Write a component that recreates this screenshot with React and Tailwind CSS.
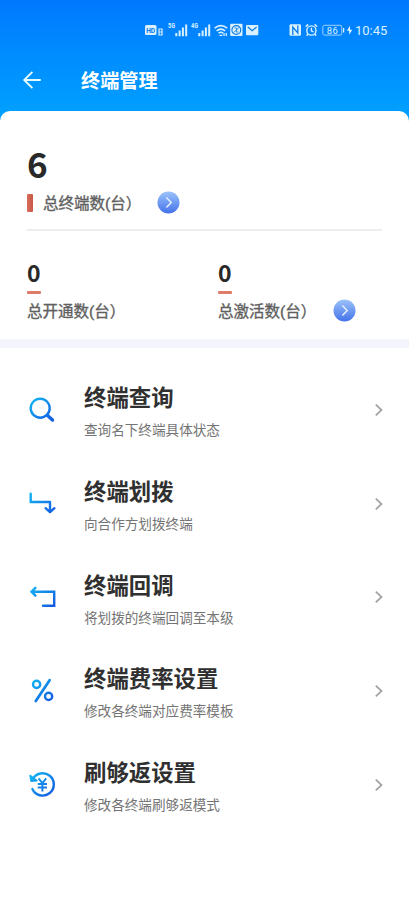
import React from "react";

const grad = (id) => (
  <defs>
    <linearGradient id={id} x1="0" y1="0" x2="28" y2="30" gradientUnits="userSpaceOnUse">
      <stop offset="0.1" stopColor="#12b8f4" />
      <stop offset="0.9" stopColor="#1455e0" />
    </linearGradient>
  </defs>
);

function RowIcon({ id, children }) {
  return (
    <svg className="h-[30px] w-[28px] shrink-0" viewBox="0 0 28 30" fill="none" stroke={`url(#${id})`} strokeWidth="2.4">
      {grad(id)}
      {children}
    </svg>
  );
}

const rows = [
  {
    id: "search",
    title: "终端查询",
    sub: "查询名下终端具体状态",
    icon: (
      <>
        <circle cx="12.2" cy="13.2" r="9.5" />
        <path d="M19.3 20.3l5.2 4.7" strokeWidth="3.4" strokeLinecap="round" />
      </>
    ),
  },
  {
    id: "assign",
    title: "终端划拨",
    sub: "向合作方划拨终端",
    icon: <path d="M2.7 4.6v8.4H22v10M17.6 19.2l4.4 4 4.4-4" strokeLinecap="round" strokeLinejoin="round" />,
  },
  {
    id: "recall",
    title: "终端回调",
    sub: "将划拨的终端回调至本级",
    icon: <path d="M7.4 5.8L3.5 9.7l3.9 4M4 9.7h22.2v14H15" strokeLinecap="round" />,
  },
  {
    id: "rate",
    title: "终端费率设置",
    sub: "修改各终端对应费率模板",
    icon: (
      <>
        <circle cx="8.6" cy="8.4" r="3.6" />
        <circle cx="20.6" cy="20.4" r="3.6" />
        <path d="M21.6 4.2L7.8 25" strokeWidth="2.8" strokeLinecap="round" />
      </>
    ),
  },
  {
    id: "cashback",
    title: "刷够返设置",
    sub: "修改各终端刷够返模式",
    icon: (
      <>
        <path d="M4.6 9.4A11.2 11.2 0 1 1 4.4 19" strokeLinecap="round" />
        <path d="M2.2 5.6l1 5.4 5.6-.4z" strokeWidth="1.8" strokeLinejoin="round" fill="#12b0f0" />
        <path d="M10.6 8.3l3.8 4.8 3.8-4.8M14.4 13v8.6M9.8 14h9.2M9.8 17.6h9.2" strokeWidth="2" />
      </>
    ),
  },
];

function Go({ id }) {
  return (
    <svg className="size-[23px] shrink-0" viewBox="0 0 23 23" fill="none">
      <defs>
        <linearGradient id={id} x1="0" y1="0" x2="0" y2="1">
          <stop offset="0" stopColor="#9cc3fa" />
          <stop offset="1" stopColor="#4472ea" />
        </linearGradient>
      </defs>
      <circle cx="11.5" cy="11.5" r="11" fill={`url(#${id})`} />
      <path d="M9.4 6.6l4.8 4.9-4.8 4.9" stroke="#e9f2ff" strokeWidth="1.4" />
    </svg>
  );
}

function Signal({ label }) {
  return (
    <svg className="h-[14px] w-[20px]" viewBox="0 0 20 14" fill="#d9f1ff">
      <text x="0" y="5.2" fontSize="7" fontWeight="700" textLength="7" lengthAdjust="spacingAndGlyphs">{label}</text>
      <path d="M7.3 10h2v3.2h-2zM10.6 7.5h2v5.7h-2zM13.9 4.5h2v8.7h-2zM17.2 1.5h2v11.7h-2z" />
    </svg>
  );
}

function StatusBar() {
  return (
    <div className="flex h-[60px] items-center pl-[145px] text-[#d9f1ff]">
      <svg className="h-[14px] w-[23px]" viewBox="0 0 23 14" fill="none">
        <rect x="0" y="2" width="11.5" height="10" rx="1.5" fill="#d9f1ff" />
        <text x="1.2" y="9.8" fontSize="7.5" fontWeight="700" fill="#087dec" textLength="9" lengthAdjust="spacingAndGlyphs">HD</text>
        <path d="M14 6h3v6h-3zM14.2 9h2.6" stroke="currentColor" strokeWidth="1.2" />
      </svg>
      <Signal label="5G" />
      <span className="w-[3px]" />
      <Signal label="4G" />
      <svg className="ml-[3px] h-[14px] w-[14px]" viewBox="0 0 14 14" fill="none" stroke="currentColor" strokeWidth="1.6">
        <path d="M.6 5.2q6.3-5.2 12.6 0M2.6 7.8q4.3-3.4 8.6 0M4.6 10.2q2.3-1.8 4.6 0" />
        <path d="M5.5 12.3h2.8M10 10v3M12.3 10v3" strokeWidth="1.3" />
      </svg>
      <svg className="ml-[2px] h-[14px] w-[13px]" viewBox="0 0 13 14" fill="none">
        <rect x=".2" y=".8" width="12.3" height="12.3" rx="1" fill="#d9f1ff" />
        <circle cx="6.3" cy="7" r="4.4" stroke="#0878dd" strokeWidth="1.1" />
        <path d="M3.2 10L9.5 4M4.5 5h2.2v2.2M8.5 9H6.3V7" stroke="#0878dd" strokeWidth=".8" />
      </svg>
      <svg className="ml-[3px] h-[14px] w-[13px]" viewBox="0 0 13 14" fill="none">
        <rect x="0" y="2" width="12.3" height="10.3" rx="1" fill="#d9f1ff" />
        <path d="M1.8 4l4.4 3.7L10.6 4" stroke="#0878dd" strokeWidth="1.2" />
      </svg>
      <svg className="ml-[30px] h-[14px] w-[13px]" viewBox="0 0 13 14" fill="none">
        <rect x=".5" y="1.2" width="11.5" height="11.6" rx="1.2" fill="#d9f1ff" />
        <path d="M3.8 12V4l5 6V2.4" stroke="#087dec" strokeWidth="1.3" />
      </svg>
      <svg className="ml-[3px] h-[14px] w-[13px]" viewBox="0 0 13 14" fill="none" stroke="currentColor" strokeWidth="1.4">
        <circle cx="6.4" cy="7.5" r="4.6" />
        <path d="M6.4 4.8v3l2.1 1.2M.7 3.6l2.5-2.2M12.1 3.6L9.6 1.4M3 11l-1.3 1.7M9.8 11l1.3 1.7" />
      </svg>
      <svg className="ml-[4px] h-[14px] w-[31px]" viewBox="0 0 31 14" fill="none">
        <rect x=".8" y="2.3" width="19" height="9.8" rx="1.8" stroke="#9fd2ff" />
        <path d="M21.6 5v4.5" stroke="#d9f1ff" strokeWidth="1.3" />
        <text x="4.8" y="10.6" fontSize="9.5" fill="#d9f1ff" textLength="11">86</text>
        <path d="M28 2.7l-3 5h2.2v4.1l3-5H28z" fill="#e8f7ff" />
      </svg>
      <span className="ml-[2px] font-[Roboto] text-[13px] leading-none">10:45</span>
    </div>
  );
}

const label = "text-[15.5px] leading-[22px] text-[#606060] whitespace-nowrap [-webkit-text-stroke:0.35px_#606060]";
const digit = "font-['Noto_Sans_CJK_SC'] font-bold text-[#292929]";

export default function App() {
  return (
    <div className="h-[900px] w-[409px] overflow-hidden bg-white font-['Roboto','Noto_Sans_CJK_SC',sans-serif]">
      <div className="h-[123px] bg-linear-to-b from-[#0078ff] to-[#00a3ff]">
        <StatusBar />
        <div className="flex h-[40px] items-center pl-[22px] text-white">
          <svg className="h-[20px] w-[20px]" viewBox="0 0 20 20" fill="none" stroke="#e4fbff" strokeWidth="1.9">
            <path d="M10.4 1.8L2.2 10l8.2 8.2M2.2 10h16.6" />
          </svg>
          <h1 className="ml-[39px] pt-[4px] text-[19.2px] font-bold leading-none">终端管理</h1>
        </div>
      </div>
      <main className="-mt-[12px] rounded-t-[10px] bg-white">
        <section className="h-[228px] px-[27px] pt-[32px]">
          <div className={`text-[35px] leading-[40px] ${digit}`}>6</div>
          <div className="mt-[8px] flex h-[23px] items-center">
            <span className="h-[18px] w-[6px] rounded-[1px] bg-linear-to-r from-[#d86d5b] to-[#c95746]" />
            <span className={`ml-[10px] w-[114px] pt-[2px] ${label}`}>总终端数(台）</span>
            <Go id="go-total" />
          </div>
          <div className="mt-[15px] h-[2px] bg-[#ededed]" />
          <div className="flex pt-[28px]">
            <div className="w-[191px]">
              <div className={`text-[23px] leading-[26px] ${digit}`}>0</div>
              <div className="mt-[6px] h-[3px] w-[14px] rounded-[1px] bg-[#df7c69]" />
              <div className="mt-[5px] flex h-[23px] items-center">
                <span className={`pt-[2px] ${label}`}>总开通数(台）</span>
              </div>
            </div>
            <div>
              <div className={`text-[23px] leading-[26px] ${digit}`}>0</div>
              <div className="mt-[6px] h-[3px] w-[14px] rounded-[1px] bg-[#df7c69]" />
              <div className="mt-[5px] flex h-[23px] items-center">
                <span className={`w-[115px] pt-[2px] ${label}`}>总激活数(台）</span>
                <Go id="go-active" />
              </div>
            </div>
          </div>
        </section>
        <div className="h-[9px] bg-[#f4f4fc]" />
        <ul className="pt-[15px]">
          {rows.map((r) => (
            <li key={r.id} className="flex h-[93.7px] items-center pl-[28px] pr-[25px]">
              <RowIcon id={r.id}>{r.icon}</RowIcon>
              <div className="ml-[28px] flex-1 pt-[3px]">
                <h2 className="text-[22.4px] font-bold leading-[32px] text-[#303030]">{r.title}</h2>
                <p className="mt-[6px] text-[13.6px] leading-[20px] text-[#747474]">{r.sub}</p>
              </div>
              <svg className="h-[14px] w-[10px]" viewBox="0 0 10 14" fill="none" stroke="#a3a3a3" strokeWidth="1.8">
                <path d="M1.8 1.7L7.5 7l-5.7 5.3" />
              </svg>
            </li>
          ))}
        </ul>
      </main>
    </div>
  );
}
